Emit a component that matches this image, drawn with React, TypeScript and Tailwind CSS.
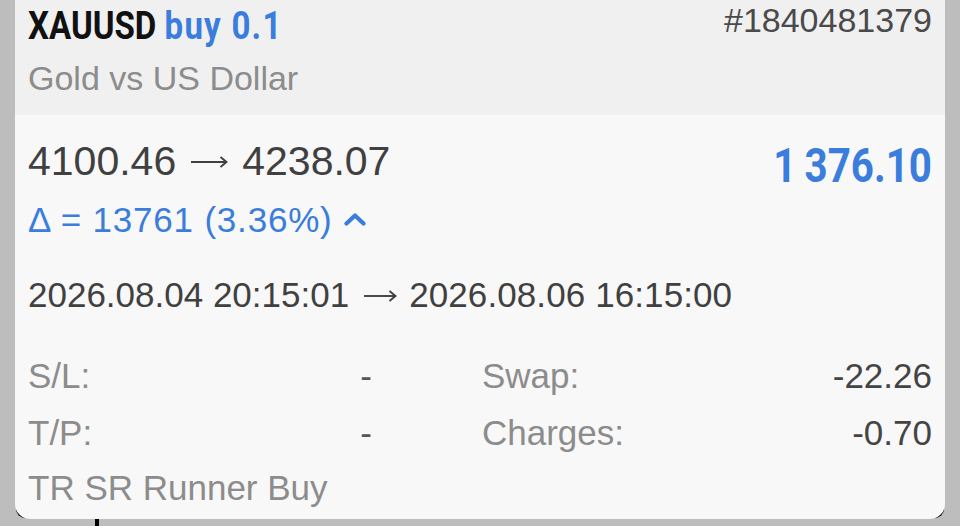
import React from "react";

const sans = { fontFamily: '"Liberation Sans", Arial, sans-serif' };
const cond = { fontFamily: 'Roboto, "Liberation Sans", sans-serif' };

function Chevron() {
  return (
    <svg width="22" height="14" viewBox="0 0 22 14" className="inline-block ml-[11px] mb-[2px]">
      <polyline points="2.5,11.5 11,3.5 19.5,11.5" fill="none" stroke="#3a7ddc" strokeWidth="4.2" strokeLinecap="round" strokeLinejoin="round" />
    </svg>
  );
}

function Arrow({ w, className }: { w: number; className: string }) {
  return (
    <svg width={w} height="14" viewBox={`0 0 ${w} 14`} className={className}>
      <line x1="1" y1="7" x2={w - 1.5} y2="7" stroke="#404040" strokeWidth="1.9" />
      <polyline points={`${w - 7.5},2 ${w - 1.5},7 ${w - 7.5},12`} fill="none" stroke="#404040" strokeWidth="1.9" strokeLinejoin="miter" />
    </svg>
  );
}

export default function App() {
  return (
    <div className="w-[960px] h-[526px] bg-[#bdbdbd] overflow-hidden" style={sans}>
      <div className="relative mx-[15px]">
        <div className="absolute top-0 bottom-[1px] left-[1px] right-[1px] bg-black rounded-b-[9px]" />
        <div className="relative bg-[#f8f8f8] rounded-b-[15px] overflow-hidden">
          {/* header */}
          <div className="bg-[#f0f0f0] px-[13px] pb-[11px]">
            <div className="flex justify-between items-start">
              <div className="text-[38px] leading-[52px] font-bold whitespace-nowrap origin-left scale-x-[0.87]" style={cond}>
                <span className="text-[#111111]">XAUUSD</span>{" "}
                <span className="text-[#3a7ddc] tracking-[1.4px]">buy 0.1</span>
              </div>
              <div className="text-[34px] leading-[40px] text-[#4a4a4a]">#1840481379</div>
            </div>
            <div className="text-[34px] leading-[52px] text-[#8c8c8c]">Gold vs US Dollar</div>
          </div>
          {/* body */}
          <div className="px-[13px] pt-[22px] pb-[4px]">
            <div className="flex justify-between items-start">
              <div>
                <div className="text-[41px] leading-[48px] text-[#404040] whitespace-nowrap flex items-center">
                  <span>4100.46</span>
                  <Arrow w={38} className="mx-[14px] mt-[2px]" />
                  <span>4238.07</span>
                </div>
                <div className="mt-[15px] text-[35px] leading-[40px] text-[#3a7ddc] whitespace-nowrap flex items-center">
                  <span className="tracking-[0.8px]">Δ = 13761 (3.36%)</span>
                  <Chevron />
                </div>
              </div>
              <div className="mt-[5px] text-[48px] leading-[48px] font-bold text-[#3a7ddc] whitespace-nowrap origin-right scale-x-[0.84]" style={cond}>
                1&#8201;376.10
              </div>
            </div>
            <div className="mt-[35px] text-[35px] leading-[40px] text-[#404040] whitespace-nowrap flex items-center">
              <span>2026.08.04 20:15:01</span>
              <Arrow w={34} className="ml-[14px] mr-[12px] mt-[2px]" />
              <span className="tracking-[0.1px]">2026.08.06 16:15:00</span>
            </div>
            <div className="mt-[32px] grid grid-cols-[344px_450px] gap-x-[110px] text-[35px]">
              <div className="flex justify-between leading-[57px]">
                <span className="text-[#8c8c8c]">S/L:</span>
                <span className="text-[#555555]">-</span>
              </div>
              <div className="flex justify-between leading-[57px]">
                <span className="text-[#8c8c8c]">Swap:</span>
                <span className="text-[#444444]">-22.26</span>
              </div>
              <div className="flex justify-between leading-[57px]">
                <span className="text-[#8c8c8c]">T/P:</span>
                <span className="text-[#555555]">-</span>
              </div>
              <div className="flex justify-between leading-[57px]">
                <span className="text-[#8c8c8c]">Charges:</span>
                <span className="text-[#444444]">-0.70</span>
              </div>
            </div>
            <div className="text-[35px] leading-[54px] text-[#8c8c8c]">TR SR Runner Buy</div>
          </div>
        </div>
      </div>
      <div className="ml-[95px] w-[4px] h-[7px] bg-black" />
    </div>
  );
}
